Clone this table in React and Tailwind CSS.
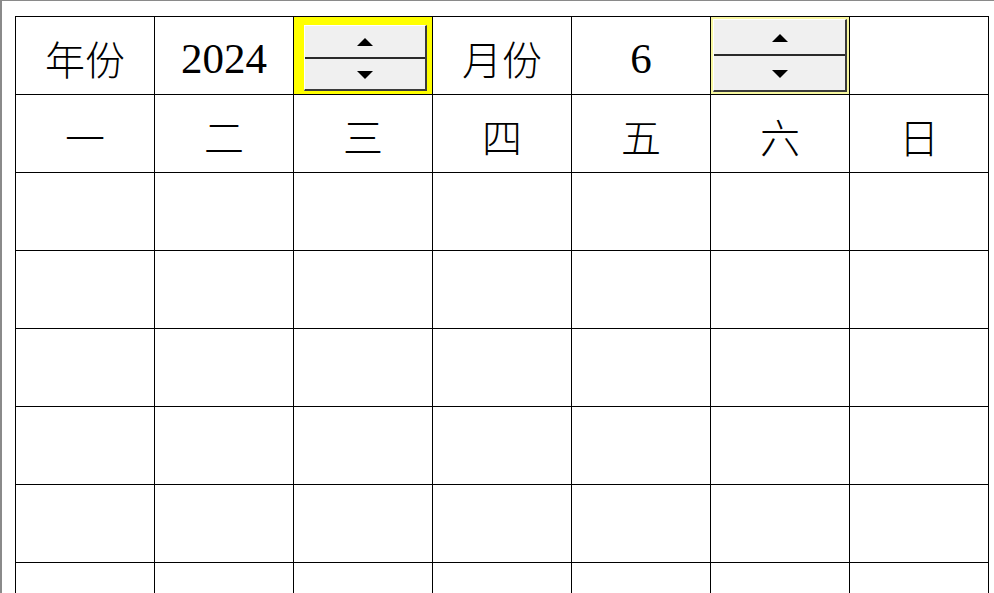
import React from "react";

const cjk = { fontFamily: '"Noto Sans CJK SC", "Noto Sans CJK JP", sans-serif', fontWeight: 300 };

function Cell({ children, className = "" }) {
  return (
    <div className={`w-[139px] h-[78px] shrink-0 border-r border-b border-black flex items-center justify-center ${className}`}>
      {children}
    </div>
  );
}

function Tri({ up }) {
  return (
    <svg width="16" height="8" viewBox="0 0 16 8" className="block">
      {up ? <polygon points="8,0 16,8 0,8" fill="#000" /> : <polygon points="0,0 16,0 8,8" fill="#000" />}
    </svg>
  );
}

function Spin({ variant }) {
  const bright = variant === 1;
  return (
    <div
      className={`w-[139px] h-[78px] shrink-0 border-r border-b border-black flex ${
        bright ? "bg-[#ffff00] pl-[10px] pr-[5px] pt-[8px] pb-[3px]" : "bg-[#f8f8a0] p-[2px]"
      }`}
    >
      <div className="flex-1 flex flex-col bg-[#f0f0f0] border-t border-l border-t-white border-l-white border-r-2 border-b-2 border-r-[#3a3a3a] border-b-[#3a3a3a]">
        <div className="flex-1 flex items-center justify-center pt-[2px]">
          <Tri up />
        </div>
        <div className="h-[2px] bg-[#2a2a2a]" />
        <div className="flex-1 flex items-center justify-center pt-[2px]">
          <Tri />
        </div>
      </div>
    </div>
  );
}

export default function App() {
  const weekdays = ["一", "二", "三", "四", "五", "六", "日"];
  const rows = [0, 1, 2, 3, 4, 5];
  return (
    <div className="w-[994px] h-[593px] overflow-hidden bg-white border-t border-l-2 border-[#8a8a8a]">
      <div className="ml-[13px] mt-[15px] w-[974px] border-l border-t border-black">
        <div className="flex">
          <Cell>
            <span className="text-[40px] leading-none text-black pt-[4px]" style={cjk}>年份</span>
          </Cell>
          <Cell>
            <span className="text-[43px] leading-none text-black pt-[6px]" style={{ fontFamily: '"Liberation Serif", serif' }}>2024</span>
          </Cell>
          <Spin variant={1} />
          <Cell>
            <span className="text-[40px] leading-none text-black pt-[4px]" style={cjk}>月份</span>
          </Cell>
          <Cell>
            <span className="text-[43px] leading-none text-black pt-[6px]" style={{ fontFamily: '"Liberation Serif", serif' }}>6</span>
          </Cell>
          <Spin variant={2} />
          <Cell />
        </div>
        <div className="flex">
          {weekdays.map((d) => (
            <Cell key={d}>
              <span className="text-[40px] leading-none text-black pt-[4px]" style={cjk}>{d}</span>
            </Cell>
          ))}
        </div>
        {rows.map((r) => (
          <div className="flex" key={r}>
            {weekdays.map((d) => (
              <Cell key={d} />
            ))}
          </div>
        ))}
      </div>
    </div>
  );
}
